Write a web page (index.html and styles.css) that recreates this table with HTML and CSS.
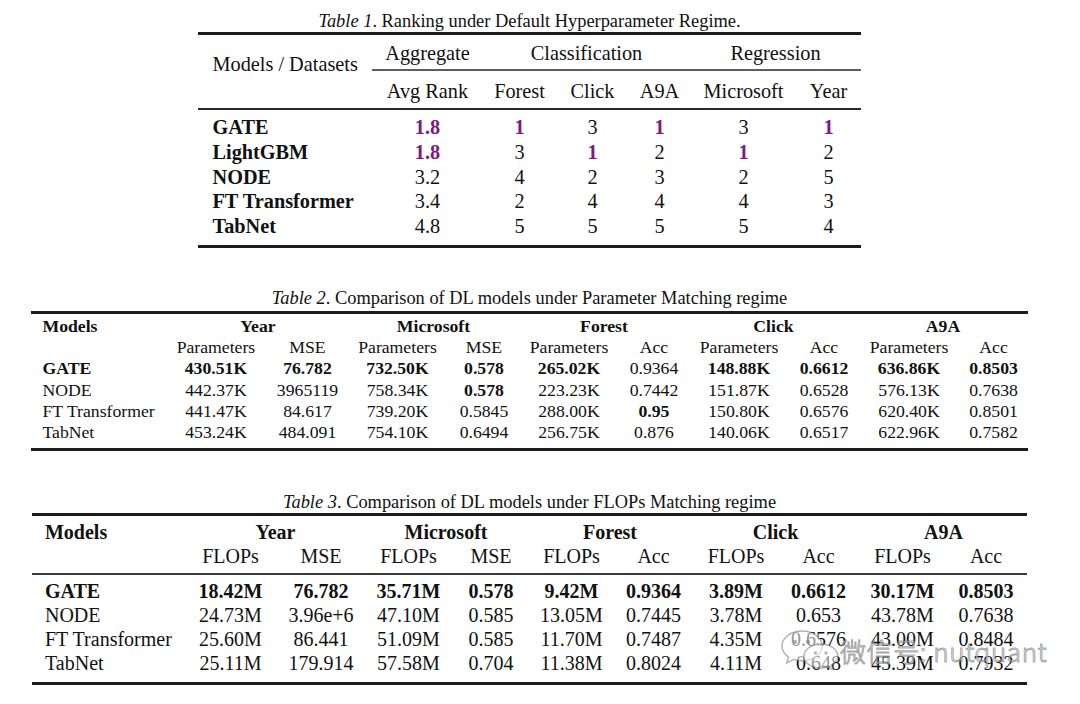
FILE: index.html
```html
<!DOCTYPE html>
<html>
<head>
<meta charset="utf-8">
<link rel="stylesheet" href="styles.css">
</head>
<body>
<div class="page">
  <section class="block block-1">
    <div class="caption"><em>Table 1</em>. Ranking under Default Hyperparameter Regime.</div>
    <table class="tbl t1">
      <colgroup><col><col><col><col><col><col><col></colgroup>
      <tbody>
        <tr class="h1">
          <td class="name models-ds" rowspan="2">Models / Datasets</td>
          <td class="grp">Aggregate</td>
          <td class="grp" colspan="3">Classification</td>
          <td class="grp" colspan="2">Regression</td>
        </tr>
        <tr class="h2">
          <td>Avg Rank</td><td>Forest</td><td>Click</td><td>A9A</td><td>Microsoft</td><td>Year</td>
        </tr>
        <tr class="first">
          <td class="name b">GATE</td><td class="hl">1.8</td><td class="hl">1</td><td>3</td><td class="hl">1</td><td>3</td><td class="hl">1</td>
        </tr>
        <tr>
          <td class="name b">LightGBM</td><td class="hl">1.8</td><td>3</td><td class="hl">1</td><td>2</td><td class="hl">1</td><td>2</td>
        </tr>
        <tr>
          <td class="name b">NODE</td><td>3.2</td><td>4</td><td>2</td><td>3</td><td>2</td><td>5</td>
        </tr>
        <tr>
          <td class="name b">FT Transformer</td><td>3.4</td><td>2</td><td>4</td><td>4</td><td>4</td><td>3</td>
        </tr>
        <tr class="last">
          <td class="name b">TabNet</td><td>4.8</td><td>5</td><td>5</td><td>5</td><td>5</td><td>4</td>
        </tr>
      </tbody>
    </table>
  </section>

  <section class="block block-2">
    <div class="caption"><em>Table 2</em>. Comparison of DL models under Parameter Matching regime</div>
    <table class="tbl t2">
      <colgroup><col><col><col><col><col><col><col><col><col><col><col></colgroup>
      <tbody>
        <tr class="h1">
          <td class="name b">Models</td>
          <td class="b sh-8" colspan="2">Year</td>
          <td class="b sh-13" colspan="2">Microsoft</td>
          <td class="b sh-15" colspan="2">Forest</td>
          <td class="b sh-16" colspan="2">Click</td>
          <td class="b sh-8" colspan="2">A9A</td>
        </tr>
        <tr>
          <td class="name"></td>
          <td>Parameters</td><td>MSE</td><td>Parameters</td><td>MSE</td><td>Parameters</td><td>Acc</td><td>Parameters</td><td>Acc</td><td>Parameters</td><td class="endcol">Acc</td>
        </tr>
        <tr>
          <td class="name b">GATE</td>
          <td class="b">430.51K</td><td class="b">76.782</td><td class="b">732.50K</td><td class="b">0.578</td><td class="b">265.02K</td><td>0.9364</td><td class="b">148.88K</td><td class="b">0.6612</td><td class="b">636.86K</td><td class="b endcol">0.8503</td>
        </tr>
        <tr>
          <td class="name">NODE</td>
          <td>442.37K</td><td>3965119</td><td>758.34K</td><td class="b">0.578</td><td>223.23K</td><td>0.7442</td><td>151.87K</td><td>0.6528</td><td>576.13K</td><td class="endcol">0.7638</td>
        </tr>
        <tr>
          <td class="name">FT Transformer</td>
          <td>441.47K</td><td>84.617</td><td>739.20K</td><td>0.5845</td><td>288.00K</td><td class="b">0.95</td><td>150.80K</td><td>0.6576</td><td>620.40K</td><td class="endcol">0.8501</td>
        </tr>
        <tr class="last">
          <td class="name">TabNet</td>
          <td>453.24K</td><td>484.091</td><td>754.10K</td><td>0.6494</td><td>256.75K</td><td>0.876</td><td>140.06K</td><td>0.6517</td><td>622.96K</td><td class="endcol">0.7582</td>
        </tr>
      </tbody>
    </table>
  </section>

  <section class="block block-3">
    <div class="caption"><em>Table 3</em>. Comparison of DL models under FLOPs Matching regime</div>
    <table class="tbl t3">
      <colgroup><col><col><col><col><col><col><col><col><col><col><col></colgroup>
      <tbody>
        <tr class="h1">
          <td class="name b">Models</td>
          <td class="b" colspan="2">Year</td>
          <td class="b sh-5" colspan="2">Microsoft</td>
          <td class="b sh-6" colspan="2">Forest</td>
          <td class="b sh-4" colspan="2">Click</td>
          <td class="b" colspan="2">A9A</td>
        </tr>
        <tr class="h2">
          <td class="name"></td>
          <td>FLOPs</td><td>MSE</td><td>FLOPs</td><td>MSE</td><td>FLOPs</td><td>Acc</td><td>FLOPs</td><td>Acc</td><td>FLOPs</td><td>Acc</td>
        </tr>
        <tr class="first">
          <td class="name b">GATE</td>
          <td class="b">18.42M</td><td class="b">76.782</td><td class="b">35.71M</td><td class="b">0.578</td><td class="b">9.42M</td><td class="b">0.9364</td><td class="b">3.89M</td><td class="b">0.6612</td><td class="b">30.17M</td><td class="b">0.8503</td>
        </tr>
        <tr>
          <td class="name">NODE</td>
          <td>24.73M</td><td>3.96e+6</td><td>47.10M</td><td>0.585</td><td>13.05M</td><td>0.7445</td><td>3.78M</td><td>0.653</td><td>43.78M</td><td>0.7638</td>
        </tr>
        <tr>
          <td class="name">FT Transformer</td>
          <td>25.60M</td><td>86.441</td><td>51.09M</td><td>0.585</td><td>11.70M</td><td>0.7487</td><td>4.35M</td><td>0.6576</td><td>43.00M</td><td>0.8484</td>
        </tr>
        <tr class="last">
          <td class="name">TabNet</td>
          <td>25.11M</td><td>179.914</td><td>57.58M</td><td>0.704</td><td>11.38M</td><td>0.8024</td><td>4.11M</td><td>0.648</td><td>45.39M</td><td>0.7932</td>
        </tr>
      </tbody>
    </table>
  </section>

  <div class="watermark">
    <svg class="wm-icon" width="62" height="40" viewBox="0 0 62 40">
      <path d="M24 3 C12.5 3 4 10 4 18 C4 22.5 6.6 26.4 10.6 29 L8.6 35 L15.6 31.4 C18.2 32.3 21 32.8 24 32.8 C35.5 32.8 44 26 44 18 C44 10 35.5 3 24 3 Z" />
      <circle class="eye" cx="17" cy="14" r="2.2" />
      <circle class="eye" cx="30" cy="14" r="2.2" />
      <path d="M43 16 C33 16 26 22 26 28.5 C26 35 33 40 43 40 C45.2 40 47.4 39.6 49.3 39 L55 41.5 L53.6 36.8 C57.2 34.6 59.8 31.8 59.8 28.5 C59.8 22 52.8 16 43 16 Z" />
      <circle class="eye" cx="37.5" cy="25" r="1.7" />
      <circle class="eye" cx="48" cy="25" r="1.7" />
    </svg>
    <span class="wm-text">微信号: nutquant</span>
  </div>
</div>
</body>
</html>
```

FILE: styles.css
```css
* {
  box-sizing: border-box;
}

html, body {
  margin: 0;
  padding: 0;
  background: #ffffff;
}

body {
  color: #111111;
  font-family: "Liberation Serif", "Times New Roman", serif;
}

.page {
  position: relative;
  width: 1059px;
  height: 704px;
  padding-top: 11px;
  display: flex;
  flex-direction: column;
  align-items: center;
}

.block {
  display: flex;
  flex-direction: column;
  align-items: center;
}

.block-2 {
  margin-top: 40px;
}

.block-3 {
  margin-top: 41px;
}

.caption {
  font-size: 18.4px;
  line-height: 21px;
  text-align: center;
  white-space: nowrap;
}

.block-2 .caption {
  margin-bottom: 2px;
}

.caption em {
  font-style: italic;
}

.tbl {
  border-collapse: separate;
  border-spacing: 0;
  table-layout: fixed;
  border-top: 3px solid #1c1c1c;
  border-bottom: 3px solid #1c1c1c;
}

.tbl td {
  padding: 0;
  text-align: center;
  white-space: nowrap;
  vertical-align: top;
}

.tbl td.name {
  text-align: left;
}

.b {
  font-weight: bold;
}

.hl {
  color: #7d1a80;
  font-weight: bold;
}

/* ---------- Table 1 ---------- */
.t1 {
  width: 662px;
  font-size: 20.3px;
  line-height: 24.75px;
}

.t1 col:nth-child(1) { width: 174px; }
.t1 col:nth-child(2) { width: 110px; }
.t1 col:nth-child(3) { width: 74px; }
.t1 col:nth-child(4) { width: 72px; }
.t1 col:nth-child(5) { width: 62px; }
.t1 col:nth-child(6) { width: 106px; }
.t1 col:nth-child(7) { width: 64px; }

.t1 td.name {
  padding-left: 14px;
}

.t1 .h1 td {
  line-height: 24px;
  padding-top: 6px;
  padding-bottom: 4px;
}

.t1 .h1 td.grp {
  border-bottom: 2px solid #5e5e5e;
}

.t1 .h1 td.models-ds {
  padding-top: 17px;
  border-bottom: 2px solid #2a2a2a;
}

.t1 .h2 td {
  line-height: 24px;
  padding-top: 8px;
  padding-bottom: 5px;
  border-bottom: 2px solid #2a2a2a;
}

.t1 .first td {
  padding-top: 5px;
}

.t1 .last td {
  padding-bottom: 6px;
}

/* ---------- Table 2 ---------- */
.t2 {
  width: 996px;
  font-size: 17.7px;
  line-height: 21.3px;
}

.t2 col:nth-child(1) { width: 139px; }
.t2 col:nth-child(2) { width: 91px; }
.t2 col:nth-child(3) { width: 92px; }
.t2 col:nth-child(4) { width: 88px; }
.t2 col:nth-child(5) { width: 85px; }
.t2 col:nth-child(6) { width: 85px; }
.t2 col:nth-child(7) { width: 85px; }
.t2 col:nth-child(8) { width: 85px; }
.t2 col:nth-child(9) { width: 85px; }
.t2 col:nth-child(10) { width: 85px; }
.t2 col:nth-child(11) { width: 76px; }

.t2 td.name {
  padding-left: 11px;
}

.t2 td.endcol {
  padding-left: 8px;
}

.t2 .h1 td {
  padding-top: 2px;
}

.t2 .last td {
  padding-bottom: 4px;
}

/* ---------- Table 3 ---------- */
.t3 {
  width: 995px;
  font-size: 20px;
  line-height: 24.3px;
}

.t3 col:nth-child(1) { width: 153px; }
.t3 col:nth-child(2) { width: 91px; }
.t3 col:nth-child(3) { width: 90px; }
.t3 col:nth-child(4) { width: 85px; }
.t3 col:nth-child(5) { width: 80px; }
.t3 col:nth-child(6) { width: 81px; }
.t3 col:nth-child(7) { width: 83px; }
.t3 col:nth-child(8) { width: 82px; }
.t3 col:nth-child(9) { width: 83px; }
.t3 col:nth-child(10) { width: 85px; }
.t3 col:nth-child(11) { width: 82px; }

.t3 td.name {
  padding-left: 13px;
}

.t3 .h1 td {
  line-height: 24px;
  padding-top: 4px;
}

.t3 .h2 td {
  line-height: 24px;
  padding-bottom: 5px;
  border-bottom: 2px solid #3a3a3a;
}

.t3 .first td {
  padding-top: 4px;
}

.t3 .last td {
  padding-bottom: 6px;
}

/* group header shifts */
.sh-4 { padding-right: 4px !important; }
.sh-5 { padding-right: 5px !important; }
.sh-6 { padding-right: 6px !important; }
.sh-8 { padding-right: 8px !important; }
.sh-13 { padding-right: 13px !important; }
.sh-15 { padding-right: 15px !important; }
.sh-16 { padding-right: 16px !important; }

/* ---------- Watermark ---------- */
.watermark {
  position: absolute;
  left: 778px;
  top: 628px;
  display: flex;
  align-items: center;
  pointer-events: none;
}

.wm-icon {
  overflow: visible;
}

.wm-icon path {
  fill: rgba(255, 255, 255, 0.55);
  stroke: rgba(110, 110, 110, 0.55);
  stroke-width: 1.4;
}

.wm-icon .eye {
  fill: rgba(110, 110, 110, 0.5);
}

.wm-text {
  font-family: "Noto Sans CJK SC", "Noto Sans", sans-serif;
  font-size: 26px;
  line-height: 30px;
  font-weight: 300;
  letter-spacing: 0.6px;
  color: rgba(255, 255, 255, 0.6);
  -webkit-text-stroke: 1px rgba(105, 105, 105, 0.6);
  white-space: nowrap;
  margin-top: 5px;
}
```
